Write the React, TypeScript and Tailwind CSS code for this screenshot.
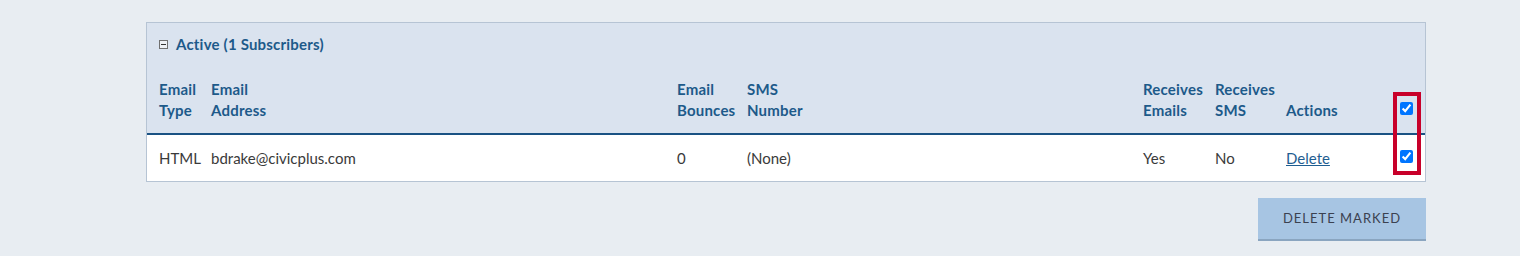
import React from "react";

const headCls = "text-[15px] font-bold leading-[21px] text-[#1d5a8a] tracking-[0.2px]";
const cellCls = "text-[15px] leading-[21px] text-[#3a3a3a]";

export default function App() {
  return (
    <div className="w-[1520px] h-[256px] bg-[#e8edf2] pt-[22px] pl-[146px]" style={{ fontFamily: "Lato, 'Open Sans', sans-serif" }}>
      <div className="relative w-[1280px] border border-[#b6c4d4] bg-white">
        <div className="bg-[#dae3ef]">
          <div className="h-[43px] flex items-center pl-[12px] gap-[8px]">
            <span className="w-[9px] h-[9px] border border-[#707070] bg-[#eef1f5] flex items-center justify-center">
              <span className="w-[5px] h-px bg-[#333]" />
            </span>
            <span className={headCls}>Active (1 Subscribers)</span>
          </div>
          <div className="grid grid-cols-[52px_466px_70px_396px_72px_71px_1fr_25px] items-end pl-[12px] pt-[13px] pb-[12px] border-b-2 border-[#1a5283]">
            <div className={headCls}>Email<br />Type</div>
            <div className={headCls}>Email<br />Address</div>
            <div className={headCls}>Email<br />Bounces</div>
            <div className={headCls}>SMS<br />Number</div>
            <div className={headCls}>Receives<br />Emails</div>
            <div className={headCls}>Receives<br />SMS</div>
            <div className={headCls}>Actions</div>
            <div className="flex items-start h-[21px] pt-[2px]">
              <input type="checkbox" defaultChecked className="w-[13px] h-[13px] m-0" />
            </div>
          </div>
        </div>
        <div className="grid grid-cols-[52px_466px_70px_396px_72px_71px_1fr_25px] items-center pl-[12px] h-[46px]">
          <div className={cellCls}>HTML</div>
          <div className={cellCls}>bdrake@civicplus.com</div>
          <div className={cellCls}>0</div>
          <div className={cellCls}>(None)</div>
          <div className={cellCls}>Yes</div>
          <div className={cellCls}>No</div>
          <div className={cellCls}>
            <a href="#" className="text-[#1f5e91] underline">Delete</a>
          </div>
          <div className="flex items-center mb-[3px]">
            <input type="checkbox" defaultChecked className="w-[13px] h-[13px] m-0" />
          </div>
        </div>
        <div className="absolute left-[1246px] top-[69px] w-[28px] h-[83px] border-[4px] border-[#c8002a]" />
      </div>
      <div className="w-[1280px] flex justify-end mt-[16px]">
        <button className="w-[168px] h-[43px] bg-[#a7c5e3] border-b-2 border-[#8aa5c0] text-[13px] tracking-[1px] text-[#3b4150]">
          DELETE MARKED
        </button>
      </div>
    </div>
  );
}
